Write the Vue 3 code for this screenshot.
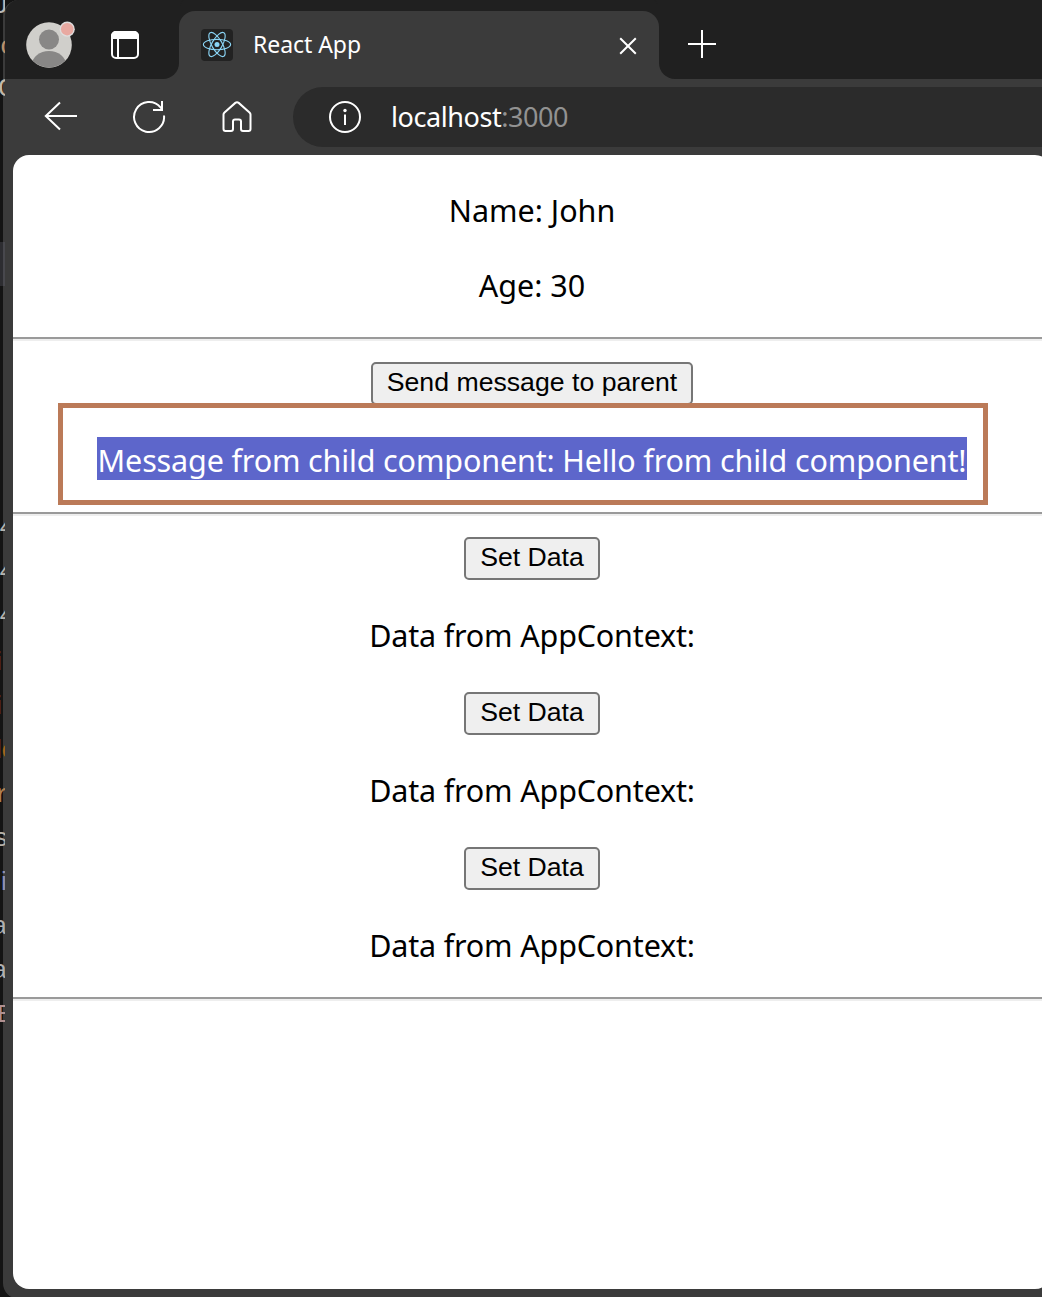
<script setup>
const codeRows = [
  { y: -16, ch: 'J', x: -7, color: '#b8b8b8' },
  { y: 25, ch: 'c', x: 0, color: '#b9906a' },
  { y: 67, ch: 'C', x: -2, color: '#c4b8a8' },
  { y: 506, ch: '4', x: -1, color: '#b5b5b0' },
  { y: 550, ch: '4', x: -1, color: '#b5b5b0' },
  { y: 594, ch: '4', x: -1, color: '#b5b5b0' },
  { y: 639, ch: 'i', x: -4, color: '#a5641c', sans: true },
  { y: 683, ch: 'i', x: -4, color: '#a5641c', sans: true },
  { y: 727, ch: 'lo', x: -4, color: '#a5641c', sans: true },
  { y: 773, ch: 'r', x: -5, color: '#b08050' },
  { y: 817, ch: 's', x: -7, color: '#b5b0a8' },
  { y: 859, ch: 'i', x: 1, color: '#8f8fb5', sans: true },
  { y: 905, ch: 'a', x: -8, color: '#b0b0b0' },
  { y: 949, ch: 'a', x: -8, color: '#b0b0b0' },
  { y: 993, ch: 'E', x: -3, color: '#b09090' },
]
const contexts = [1, 2, 3]
</script>

<template>
  <div class="desktop">
    <div class="window">
      <header class="tabs">
        <div class="left-tools">
          <svg class="avatar" width="52" height="52" viewBox="0 0 52 52">
            <defs><clipPath id="face"><circle cx="25" cy="26" r="22.5" /></clipPath></defs>
            <circle cx="25" cy="26" r="22.8" fill="#d0cfcb" />
            <g clip-path="url(#face)" fill="#888786">
              <circle cx="25" cy="20.5" r="10" />
              <ellipse cx="25" cy="46" rx="17" ry="14" />
            </g>
            <circle cx="43.2" cy="10.2" r="7.6" fill="#dedddd" />
            <circle cx="43.2" cy="10.2" r="6.2" fill="#e8a9a1" />
          </svg>
          <svg class="panes" width="28" height="28" viewBox="0 0 28 28">
            <rect x="1" y="1" width="26" height="26" rx="4" fill="none" stroke="#fff" stroke-width="2" />
            <path d="M0 8V5a5 5 0 0 1 5-5h18a5 5 0 0 1 5 5v3zM6 8h2v19H6z" fill="#fff" />
          </svg>
        </div>
        <div class="tab">
          <svg class="react" width="32" height="32" viewBox="0 0 32 32">
            <rect width="32" height="32" rx="4" fill="#222" />
            <g fill="none" stroke="#8ad4f5" stroke-width="1.15">
              <ellipse cx="16" cy="15.5" rx="13.6" ry="5.2" />
              <ellipse cx="16" cy="15.5" rx="13.6" ry="5.2" transform="rotate(60 16 15.5)" />
              <ellipse cx="16" cy="15.5" rx="13.6" ry="5.2" transform="rotate(120 16 15.5)" />
            </g>
            <circle cx="16" cy="15.5" r="2.5" fill="#8ad4f5" />
          </svg>
          <span class="title">React App</span>
          <svg class="close" width="18" height="18" viewBox="0 0 18 18">
            <path d="M1.2 1.2l15.6 15.6M16.8 1.2L1.2 16.8" stroke="#fff" stroke-width="2" />
          </svg>
        </div>
        <div class="rest">
          <svg width="28" height="28" viewBox="0 0 28 28">
            <path d="M14 0v28M0 14h28" stroke="#fff" stroke-width="2" />
          </svg>
        </div>
      </header>

      <nav class="toolbar">
        <svg class="back" width="34" height="30" viewBox="0 0 34 30">
          <path d="M16 1.5L1.8 15 16 28.500M2 15h31" fill="none" stroke="#fff" stroke-width="2" />
        </svg>
        <svg class="reload" width="34" height="34" viewBox="0 0 34 34">
          <path d="M32 15.500a15 15 0 1 1-3.500-8.200L30 9.500" fill="none" stroke="#fff" stroke-width="2" />
          <path d="M30 1v9h-9" fill="none" stroke="#fff" stroke-width="2" />
        </svg>
        <svg class="home" width="30" height="32" viewBox="0 0 30 32">
          <path d="M1.500 13.500Q1.500 12.300 2.500 11.400L13.300 1.900Q15 .7 16.700 1.900L27.500 11.400Q28.500 12.300 28.500 13.500V28Q28.500 30 26.500 30H21Q19 30 19 28V20.500Q19 18.500 17 18.500H13Q11 18.500 11 20.500V28Q11 30 9 30H3.500Q1.500 30 1.500 28Z" fill="none" stroke="#fff" stroke-width="2" />
        </svg>
        <div class="address">
          <svg width="32" height="32" viewBox="0 0 32 32">
            <circle cx="16" cy="16" r="15" fill="none" stroke="#fff" stroke-width="2" />
            <circle cx="16" cy="9.500" r="1.700" fill="#fff" />
            <path d="M16 13.500v10.500" stroke="#fff" stroke-width="2" />
          </svg>
          <span class="url">localhost<span class="port">:3000</span></span>
        </div>
      </nav>

      <main class="page">
        <p>Name: John</p>
        <p>Age: 30</p>
        <hr />
        <button class="send">Send message to parent</button>
        <div class="message">
          <p class="selected">Message from child component: Hello from child component!</p>
          <div class="highlight"></div>
        </div>
        <hr />
        <section v-for="n in contexts" :key="n" class="context">
          <button class="set">Set Data</button>
          <p class="data">Data from AppContext:</p>
        </section>
        <hr />
      </main>
    </div>
    <div class="behind">
      <div class="marker"></div>
      <span v-for="r in codeRows" :key="r.y" class="code" :class="{ sans: r.sans }" :style="{ top: r.y + 'px', left: r.x + 'px', color: r.color }">{{ r.ch }}</span>
    </div>
  </div>
</template>

<style>
body { margin: 0; overflow: hidden; background: #141414; }
</style>

<style scoped>
* { box-sizing: border-box; }
svg { display: block; flex: none; }
.desktop {
  position: relative;
  width: 1042px;
  height: 1297px;
  overflow: hidden;
  background: #141414;
  font-family: "Noto Sans", "Open Sans", sans-serif;
}
.window {
  width: 1060px;
  height: 1299px;
  margin-left: 3px;
  border-left: 2px solid #3b3b3b;
  border-radius: 16px;
  background: #3b3b3b;
  overflow: hidden;
}
.tabs { display: flex; height: 79px; background: linear-gradient(#202020, #202020) 0 0 / 100% 11px no-repeat, #3b3b3b; }
.left-tools {
  display: flex;
  width: 174px;
  height: 79px;
  padding: 19px 0 0 19px;
  background: #202020;
  border-bottom-right-radius: 16px;
}
.panes { margin: 12px 0 0 35px; }
.tab {
  display: flex;
  width: 480px;
  height: 68px;
  margin-top: 11px;
  padding: 18px 22px 0;
  background: #3b3b3b;
  border-radius: 16px 16px 0 0;
  box-shadow: 0 -16px 0 #202020;
}
.title { flex: 1; margin: -1px 0 0 20px; color: #fff; font-size: 23px; line-height: 32px; letter-spacing: -.05px; white-space: nowrap; }
.close { margin-top: 8px; }
.rest { flex: 1; height: 79px; padding: 30px 0 0 29px; background: #202020; border-bottom-left-radius: 16px; }
.toolbar { display: flex; height: 76px; padding: 8px 0 8px 39px; }
.back { margin-top: 14px; }
.reload { margin: 13px 0 0 54px; }
.home { margin: 14px 0 0 56px; }
.address {
  display: flex;
  flex: 1;
  height: 60px;
  margin-left: 41px;
  padding: 14px 0 0 36px;
  border-radius: 30px 0 0 30px;
  background: #2b2b2b;
}
.url { margin: -3px 0 0 30px; color: #fff; font-size: 27px; line-height: 38px; letter-spacing: -.43px; }
.port { color: #929292; }
.page {
  width: 1038px;
  height: 1134px;
  margin-left: 8px;
  padding-top: 32px;
  border-radius: 16px;
  background: #fff;
  color: #000;
  text-align: center;
}
p { height: 43px; margin: 0 0 32px; padding-top: 2px; font-size: 30.5px; line-height: 43px; white-space: nowrap; }
hr { height: 4px; margin: 0 0 21px; border: 0; border-top: 2px solid #9a9a9a; background: #eee; }
button {
  display: block;
  height: 43px;
  margin: 0 auto 32px;
  padding: 0 0 2px;
  border: 2px solid #767676;
  border-radius: 5px;
  background: #efefef;
  color: #000;
  font: 26.67px/37px "Liberation Sans", Arial, sans-serif;
  white-space: nowrap;
}
.send { width: 322px; }
.set { width: 136px; }
.context + .context { margin-top: 37px; }
.context .data { margin-bottom: 0; letter-spacing: -.17px; }
.context + hr { margin-top: 32px; }
.message { position: relative; }
.selected { width: 870px; margin: 0 auto 32px; background: #5d66cb; color: #fff; letter-spacing: -.15px; }
.highlight { position: absolute; left: 45px; top: -34px; width: 930px; height: 102px; border: 5px solid #bb7a58; }
.behind { position: absolute; left: 0; top: 0; width: 5px; height: 1297px; overflow: hidden; }
.marker { position: absolute; top: 242px; width: 5px; height: 44px; background: linear-gradient(90deg, #2d2d31 3px, #48484d 3px); }
.code { position: absolute; font: 26px/44px "Liberation Mono", monospace; }
.code.sans { font-family: "Liberation Sans", sans-serif; }
</style>
